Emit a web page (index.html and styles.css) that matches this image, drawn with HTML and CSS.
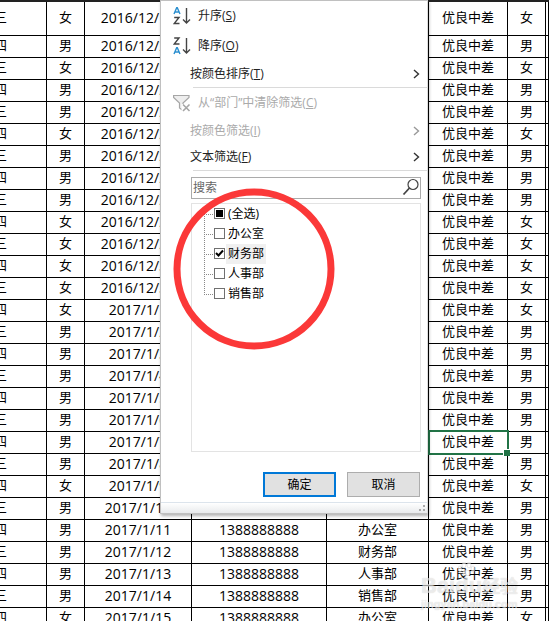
FILE: index.html
```
<!DOCTYPE html>
<html lang="zh-CN">
<head>
    <meta charset="utf-8">
    <title>部门筛选</title>
    <link rel="stylesheet" href="styles.css">
</head>
<body>
    <div class="sheet">
        <table class="grid">
            <colgroup>
                <col class="col-name">
                <col class="col-gender">
                <col class="col-date">
                <col class="col-phone">
                <col class="col-dept">
                <col class="col-grade">
                <col class="col-gender">
                <col>
            </colgroup>
            <tbody id="rows"></tbody>
        </table>

        <form class="filter-menu" onsubmit="return false">
            <button type="button" class="item item-tall">
                <svg class="icon" width="18" height="18" viewBox="0 0 18 18" fill="none" stroke-width="1.4">
                    <path d="M1 7L3.700 .7H4.300L7 7M2 5H6" stroke="#2b8fcf"/>
                    <path d="M1.200 10.500H6L1.200 16.500H6.500M13.500 1V16M10 12.500L13.500 16L17 12.500" stroke="#444"/>
                </svg>
                <span>升序(<u>S</u>)</span>
            </button>
            <button type="button" class="item item-tall">
                <svg class="icon" width="18" height="18" viewBox="0 0 18 18" fill="none" stroke-width="1.4">
                    <path d="M1.200 1H6L1.200 7H6.500M13.500 1V16M10 12.500L13.500 16L17 12.500" stroke="#444"/>
                    <path d="M1 17L3.700 10.700H4.300L7 17M2 15H6" stroke="#2b8fcf"/>
                </svg>
                <span>降序(<u>O</u>)</span>
            </button>
            <button type="button" class="item item-sub">
                <span>按颜色排序(<u>T</u>)</span>
                <svg class="arrow" width="7" height="10" viewBox="0 0 7 10"><path d="M1 1L5.500 5L1 9"/></svg>
            </button>
            <hr>
            <button type="button" class="item item-tall" disabled>
                <svg class="icon" width="18" height="18" viewBox="0 0 18 18" fill="none" stroke="#a6a6a6" stroke-width="1.2">
                    <path d="M.6 1.500H16V3.500L10 9V16.500L6.500 14V9L.6 3.500Z" fill="#eee"/>
                    <path d="M8.500 10H18V18H8.500Z" fill="#fff" stroke="none"/>
                    <path d="M10 10.500L16.500 17M16.500 10.500L10 17" stroke-width="1.6"/>
                </svg>
                <span>从“部门”中清除筛选(<u>C</u>)</span>
            </button>
            <button type="button" class="item item-sub" disabled>
                <span>按颜色筛选(<u>I</u>)</span>
                <svg class="arrow" width="7" height="10" viewBox="0 0 7 10"><path d="M1 1L5.500 5L1 9"/></svg>
            </button>
            <button type="button" class="item item-sub">
                <span>文本筛选(<u>F</u>)</span>
                <svg class="arrow" width="7" height="10" viewBox="0 0 7 10"><path d="M1 1L5.500 5L1 9"/></svg>
            </button>
            <hr>

            <div class="search">
                <input type="text" placeholder="搜索" aria-label="搜索">
                <button type="button" aria-label="搜索">
                    <svg width="18" height="18" viewBox="0 0 18 18" fill="none" stroke="#444">
                        <circle cx="11" cy="6.500" r="5" stroke-width="1.200"/>
                        <path d="M7.500 10L1.500 16.500" stroke-width="1.800"/>
                    </svg>
                </button>
            </div>

            <div class="values">
                <label><input type="checkbox" id="all"><span>(全选)</span></label>
                <label><input type="checkbox"><span>办公室</span></label>
                <label><input type="checkbox" checked><span class="current">财务部</span></label>
                <label><input type="checkbox"><span>人事部</span></label>
                <label><input type="checkbox"><span>销售部</span></label>
            </div>

            <div class="actions">
                <button type="submit" class="ok">确定</button>
                <button type="button">取消</button>
            </div>
            <div class="grip">
                <svg width="8" height="8" viewBox="0 0 8 8" fill="#aaa">
                    <path d="M4 0H6V2H4ZM4 4H6V6H4ZM0 4H2V6H0Z"/>
                </svg>
            </div>
        </form>

        <svg class="ring" width="162" height="162" viewBox="0 0 162 162">
            <circle cx="81" cy="81" r="77"/>
        </svg>

        <div class="watermark">
            <svg width="18" height="14" viewBox="0 0 18 14">
                <ellipse cx="3" cy="7" rx="2" ry="3"/>
                <ellipse cx="7" cy="3" rx="2" ry="3"/>
                <ellipse cx="12" cy="3" rx="2" ry="3"/>
                <ellipse cx="16" cy="7" rx="2" ry="3"/>
                <ellipse cx="9.500" cy="11" rx="4" ry="3"/>
            </svg>
            <div class="brand">Baidu<span>经验</span></div>
            <div class="site">jingyan.baidu.com</div>
        </div>
    </div>

    <script>
        const women = [0, 2, 5, 9, 10, 11, 12, 13, 21, 27];
        const depts = ['财务部', '人事部', '销售部', '办公室'];
        const tbody = document.getElementById('rows');

        for (let i = 0; i < 28; i++) {
            const name = i % 2 ? '李四' : '张三';
            const gender = women.includes(i) ? '女' : '男';
            const date = i < 13 ? `2016/12/${19 + i}` : `2017/1/${i - 12}`;
            const selected = i === 19 ? ' class="selected"' : '';
            tbody.insertAdjacentHTML('beforeend',
                `<tr><td>${name}</td><td>${gender}</td><td>${date}</td><td>1388888888</td>` +
                `<td>${depts[i % 4]}</td><td${selected}>优良中差</td><td>${gender}</td><td></td></tr>`);
        }

        document.getElementById('all').indeterminate = true;
    </script>
</body>
</html>
```

FILE: styles.css
```
* {
    box-sizing: border-box;
}
body {
    margin: 0;
    background: #fff;
    color: #000;
    font-family: "Open Sans", "Noto Sans CJK SC", sans-serif;
}
button, input {
    font: inherit;
    color: inherit;
}
.sheet {
    position: relative;
    height: 100vh;
    overflow: hidden;
}

/* spreadsheet */
.grid {
    width: calc(100% + 58px);
    margin-left: -58px;
    table-layout: fixed;
    border-spacing: 0;
    border-top: 2px solid #222;
    font-size: 14px;
    line-height: 19px;
}
.grid td {
    height: 22px;
    padding: 0 0 2px;
    border-right: 1px solid #000;
    border-bottom: 1px solid #000;
    text-align: center;
    white-space: nowrap;
}
.grid tr:first-child td {
    height: 34px;
}
.grid td:not(:nth-child(3)):not(:nth-child(4)) {
    font-size: 13px;
}
.col-name { width: 105px; }
.col-gender { width: 38px; }
.col-date { width: 107px; }
.col-phone { width: 135px; }
.col-dept { width: 102px; }
.col-grade { width: 79px; }
.grid .selected {
    position: relative;
}
.selected::before {
    content: "";
    position: absolute;
    inset: -2px -2px -2px -1px;
    border: 2px solid #217346;
}
.selected::after {
    content: "";
    position: absolute;
    right: -3px;
    bottom: -3px;
    width: 6px;
    height: 6px;
    background: #217346;
    border: solid #fff;
    border-width: 1px 0 0 1px;
}

/* filter drop-down */
.filter-menu {
    position: absolute;
    top: 0;
    left: 160px;
    width: 268px;
    background: #fff;
    border: 1px solid #c0c0c0;
    border-right-color: #ddd;
    box-shadow: 1px 2px 3px rgba(0, 0, 0, 0.3);
    font-size: 12px;
    line-height: 18px;
}
.item {
    display: flex;
    align-items: center;
    width: 100%;
    height: 26px;
    padding: 0 7px 0 29px;
    border: 0;
    background: none;
    text-align: left;
    color: #222;
}
.item:disabled {
    color: #aaa;
}
.item-tall {
    height: 30px;
    padding-left: 12px;
    gap: 7px;
}
.arrow {
    margin-left: auto;
    fill: none;
    stroke: #333;
    stroke-width: 1.4;
}
.item:disabled .arrow {
    stroke: #999;
}
.filter-menu hr {
    height: 1px;
    margin: 0 0 0 32px;
    border: 0;
    background: #dadada;
}
.search {
    display: flex;
    height: 22px;
    margin: 6px 6px 4px 30px;
    border: 1px solid #ababab;
}
.search input {
    flex: 1;
    min-width: 0;
    padding: 0 1px;
    border: 0;
    outline: 0;
}
.search input::placeholder {
    color: #666;
}
.search button {
    display: flex;
    padding: 0;
    border: 0;
    background: none;
}
.values {
    height: 249px;
    margin: 0 6px 0 30px;
    padding-left: 12px;
    border: 1px solid #e3e3e3;
}
.values label {
    display: flex;
    align-items: center;
    height: 20px;
    background:
        linear-gradient(#fff, #fff) no-repeat,
        repeating-linear-gradient(#888 0 1px, #fff 1px 2px) 0 0 / 1px 20px no-repeat,
        repeating-linear-gradient(90deg, #888 0 1px, #fff 1px 2px) 0 10px / 9px 1px no-repeat;
    background-size: 0 0, 1px 20px, 9px 1px;
}
.values label:first-child {
    background-size: 1px 5px, 1px 20px, 9px 1px;
}
.values label:last-child {
    background-size: 0 0, 1px 10px, 9px 1px;
}
.values input {
    appearance: none;
    width: 11px;
    height: 11px;
    margin: 0 1px 1px 10px;
    border: 1px solid #707070;
    background: #fff;
}
.values input:indeterminate {
    background: #000;
    box-shadow: inset 0 0 0 1px #fff;
}
.values input:checked {
    background: url('data:image/svg+xml,<svg xmlns="http://www.w3.org/2000/svg" viewBox="0 0 9 9"><path d="M1 4L3.500 6.500L8 1.500" fill="none" stroke="black" stroke-width="2"/></svg>');
}
.values span {
    height: 20px;
    padding: 0 2px;
    line-height: 20px;
}
.values .current {
    background: #f0f0f0;
}
.actions {
    display: flex;
    justify-content: flex-end;
    gap: 11px;
    padding: 20px 7px 5px;
}
.actions button {
    width: 73px;
    height: 25px;
    padding: 0;
    border: 1px solid #adadad;
    background: #e1e1e1;
}
.actions .ok {
    border: 2px solid #0078d7;
}
.grip {
    display: flex;
    justify-content: flex-end;
    align-items: flex-end;
    height: 11px;
    border-top: 1px solid #dce4ec;
    background: linear-gradient(#fff, #e8eaec);
}

/* marks over the sheet */
.ring {
    position: absolute;
    top: 188px;
    left: 173px;
    fill: none;
    stroke: #fb3838;
    stroke-width: 7;
    pointer-events: none;
}
.watermark {
    position: absolute;
    right: 28px;
    bottom: 10px;
    width: 100px;
    color: rgba(255, 255, 255, 0.6);
    text-shadow: 0 0 1px rgba(0, 0, 0, 0.2);
    font-family: "Liberation Sans", "Noto Sans CJK SC", sans-serif;
    font-weight: bold;
    white-space: nowrap;
    pointer-events: none;
}
.watermark svg {
    display: block;
    margin-left: 36px;
    fill: rgba(255, 255, 255, 0.6);
    stroke: rgba(0, 0, 0, 0.1);
}
.brand {
    font-size: 22px;
    line-height: 20px;
}
.brand span {
    font-size: 18px;
}
.site {
    font-size: 11px;
    line-height: 14px;
}
```
